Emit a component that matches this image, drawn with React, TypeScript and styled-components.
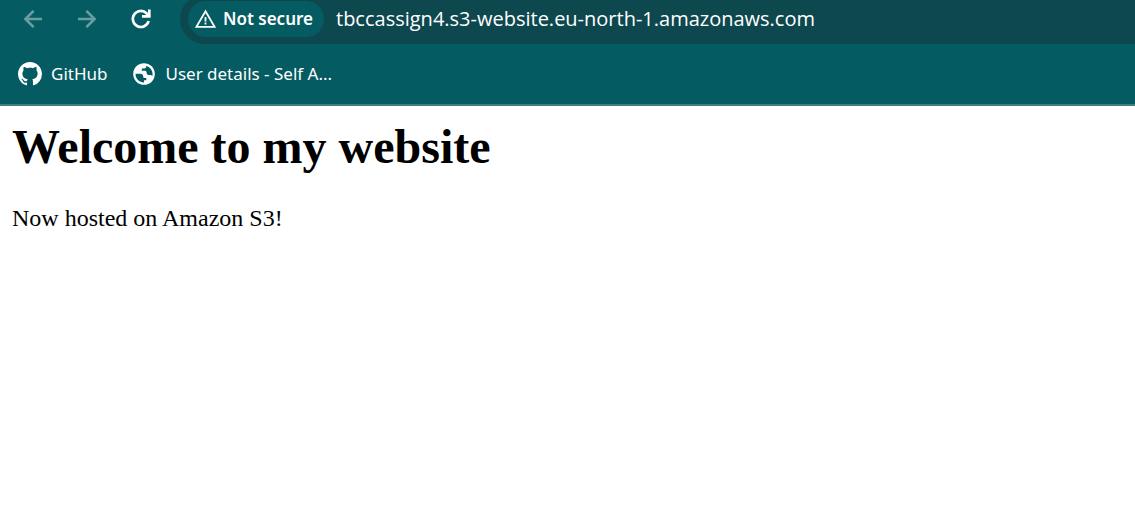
import React from "react";
import styled, { createGlobalStyle } from "styled-components";

const GlobalStyle = createGlobalStyle`
  * { box-sizing: border-box; }
  body { margin: 0; background: #fff; }
`;

const uiFont = `"Noto Sans", "Open Sans", sans-serif`;

const BrowserHeader = styled.header`
  background: #045c62;
  border-bottom: 2px solid #3f7f84;
  color: #fff;
  font-family: ${uiFont};
`;

const Toolbar = styled.div`
  display: flex;
  height: 44px;
  overflow: hidden;
  align-items: flex-end;
  padding-left: 20px;
`;

const NavButtons = styled.div`
  display: flex;
  gap: 28px;
  padding-bottom: 12px;
`;

const IconButton = styled.button`
  display: flex;
  width: 26px;
  height: 26px;
  padding: 0;
  border: 0;
  background: none;
  color: #fff;
  &:disabled { color: #6a9da0; }
`;

const AddressBar = styled.div`
  display: flex;
  flex: 1;
  align-items: center;
  height: 50px;
  margin-left: 26px;
  padding-left: 8px;
  border-radius: 25px 0 0 25px;
  background: #0e484f;
`;

const SecurityChip = styled.button`
  display: flex;
  align-items: center;
  gap: 6px;
  width: 136px;
  height: 36px;
  padding: 0 0 0 6px;
  border: 0;
  border-radius: 18px;
  background: #045c62;
  color: #fff;
  font: 600 17px/24px ${uiFont};
  white-space: nowrap;
`;

const AddressInput = styled.input`
  flex: 1;
  min-width: 0;
  padding: 0;
  margin-left: 12px;
  border: 0;
  outline: 0;
  background: none;
  color: #fff;
  font: 400 20px/28px "Open Sans", "Noto Sans", sans-serif;
`;

const Bookmarks = styled.nav`
  display: flex;
  align-items: center;
  gap: 24px;
  height: 60px;
  padding-left: 17px;
`;

const Bookmark = styled.a`
  display: flex;
  align-items: center;
  gap: 8px;
  color: #fff;
  font-size: 17px;
  line-height: 24px;
  text-decoration: none;
  white-space: nowrap;
`;

const Page = styled.main`
  padding: 12px;
  color: #000;
  font-family: "Liberation Serif", "Times New Roman", serif;
`;

const Title = styled.h1`
  margin: 0 0 28px;
  font-size: 48px;
  line-height: 58px;
`;

const Text = styled.p`
  margin: 0;
  font-size: 24px;
  line-height: 28px;
`;

const BackIcon = () => (
  <svg width="26" height="26" viewBox="0 0 26 26" fill="none" stroke="currentColor" strokeWidth="2.6">
    <path d="M22 13H6M13.6 4.8L5.4 13L13.6 21.2" />
  </svg>
);

const ForwardIcon = () => (
  <svg width="26" height="26" viewBox="0 0 26 26" fill="none" stroke="currentColor" strokeWidth="2.6">
    <path d="M4 13H20M12.4 4.8L20.6 13L12.4 21.2" />
  </svg>
);

const ReloadIcon = () => (
  <svg width="26" height="26" viewBox="0 0 26 26" fill="none" stroke="currentColor" strokeWidth="2.7">
    <path d="M20.6 15A8 8 0 1 1 18.6 7.4L21 9.8M21.3 3.6V10.4H14" />
  </svg>
);

const WarningIcon = () => (
  <svg width="23" height="22" viewBox="0 0 23 22" fill="none" stroke="currentColor" strokeWidth="1.8">
    <path d="M11.5 3.2L20.6 18.8H2.4ZM11.5 9V13.4M11.5 14.6V16.4" />
  </svg>
);

const GitHubIcon = () => (
  <svg width="26" height="26" viewBox="-0.7 -0.7 17.4 17.4" fill="currentColor">
    <path d="M8 0C3.58 0 0 3.58 0 8c0 3.54 2.29 6.53 5.47 7.59.4.07.55-.17.55-.38 0-.19-.01-.82-.01-1.49-2.01.37-2.53-.49-2.69-.94-.09-.23-.48-.94-.82-1.13-.28-.15-.68-.52-.01-.53.63-.01 1.08.58 1.23.82.72 1.21 1.87.87 2.33.66.07-.52.28-.87.51-1.07-1.78-.2-3.64-.89-3.64-3.95 0-.87.31-1.59.82-2.15-.08-.2-.36-1.02.08-2.12 0 0 .67-.21 2.2.82.64-.18 1.32-.27 2-.27s1.36.09 2 .27c1.53-1.04 2.2-.82 2.2-.82.44 1.1.16 1.92.08 2.12.51.56.82 1.27.82 2.15 0 3.07-1.87 3.75-3.65 3.95.29.25.54.73.54 1.48 0 1.07-.01 1.93-.01 2.2 0 .21.15.46.55.38A8.01 8.01 0 0 0 16 8c0-4.42-3.58-8-8-8z" />
  </svg>
);

const GlobeIcon = () => (
  <svg width="26" height="26" viewBox="0 0 26 26">
    <circle cx="13" cy="13" r="10.8" fill="#fff" />
    <path
      fill="#045c62"
      d="M15.2 4.9C18.9 5.8 21.6 9.1 21.6 13C21.6 13.7 21.5 14.4 21.3 15C20.6 14.2 20 13.9 19 13.9H17.6C16 13.9 15.6 12.9 15.6 11.6C15.6 10.3 14.8 9.7 13.5 9.7H10.8V7.5H13.2C14.4 7.5 15.2 6.7 15.2 5.5ZM4.5 12.8H9.2C11.2 12.8 12.2 13.8 12.2 15.4C12.2 16.5 12.8 17 13.9 17H15.3V19.2H13V21.5C8.3 21.5 4.5 17.7 4.5 12.8Z"
    />
  </svg>
);

export default function App() {
  return (
    <>
      <GlobalStyle />
      <BrowserHeader>
        <Toolbar>
          <NavButtons>
            <IconButton aria-label="Back" disabled><BackIcon /></IconButton>
            <IconButton aria-label="Forward" disabled><ForwardIcon /></IconButton>
            <IconButton aria-label="Reload"><ReloadIcon /></IconButton>
          </NavButtons>
          <AddressBar>
            <SecurityChip><WarningIcon />Not secure</SecurityChip>
            <AddressInput
              aria-label="Address"
              defaultValue="tbccassign4.s3-website.eu-north-1.amazonaws.com"
              spellCheck={false}
            />
          </AddressBar>
        </Toolbar>
        <Bookmarks aria-label="Bookmarks">
          <Bookmark href="#github"><GitHubIcon />GitHub</Bookmark>
          <Bookmark href="#user-details"><GlobeIcon />User details - Self A...</Bookmark>
        </Bookmarks>
      </BrowserHeader>
      <Page>
        <Title>Welcome to my website</Title>
        <Text>Now hosted on Amazon S3!</Text>
      </Page>
    </>
  );
}
